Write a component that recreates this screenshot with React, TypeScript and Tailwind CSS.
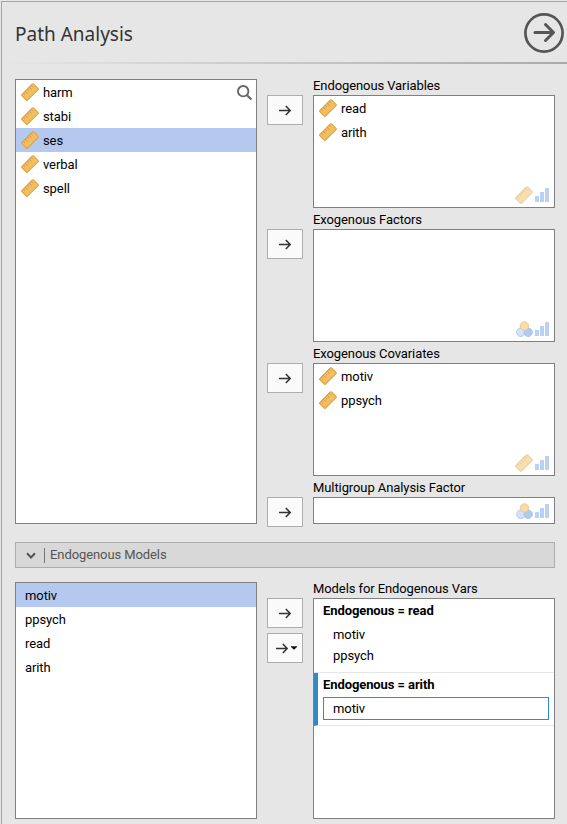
import React from "react";

function Ruler({ faded = false }: { faded?: boolean }) {
  return (
    <svg width="18" height="18" viewBox="0 0 18 18" className={faded ? "opacity-50" : ""}>
      <g transform="rotate(-45 9 9)">
        <rect x="0.6" y="5" width="16.6" height="8" rx="0.8" fill="#f1be64" stroke="#e0a03c" strokeWidth="1" />
        <path d="M3.6 5v2.4M6.3 5v3.4M9 5v2.4M11.7 5v3.4M14.4 5v2.4" stroke="#cf922f" strokeWidth="0.8" />
      </g>
    </svg>
  );
}

function Bars() {
  return (
    <svg width="14" height="15" viewBox="0 0 14 15" fill="#bad1f4">
      <rect x="0" y="8" width="4" height="6" />
      <rect x="5" y="4" width="4" height="10" />
      <rect x="10" y="0" width="4" height="14" />
    </svg>
  );
}

function Circles() {
  return (
    <svg width="17" height="17" viewBox="0 0 17 17" strokeWidth="1">
      <circle cx="4.8" cy="11.3" r="4.2" fill="#d5e2f7" stroke="#b2cbf0" />
      <circle cx="12.2" cy="11.3" r="4.2" fill="#b0cbf2" stroke="#a9c5ef" />
      <circle cx="8.4" cy="5" r="4.2" fill="#f7dca8" stroke="#eacb91" />
    </svg>
  );
}

function Arrow() {
  return (
    <svg width="12" height="11" viewBox="0 0 12 11" fill="none" stroke="#333" strokeWidth="1.6">
      <path d="M0 5.5h11M6.8 1l4.4 4.5L6.8 10" />
    </svg>
  );
}

function MoveButton({ menu = false }: { menu?: boolean }) {
  return (
    <button className={`flex h-[30px] w-9 shrink-0 items-center justify-center border border-[#adadad] bg-[#fafafa] ${menu ? "gap-[3px] pl-[3px]" : ""}`}>
      <Arrow />
      {menu && (
        <svg width="6" height="4" viewBox="0 0 6 4">
          <path d="M0 0.3h6v0.6L3 3.8 0 0.9z" fill="#111" />
        </svg>
      )}
    </button>
  );
}

function Variable({ name, selected = false }: { name: string; selected?: boolean }) {
  return (
    <div className={`flex h-6 items-center gap-1 pl-[5px] ${selected ? "bg-[#b5c9f0]" : ""}`}>
      <Ruler />
      <span className="pt-0.5">{name}</span>
    </div>
  );
}

function Target({ label, kind, names = [], short = false }: { label: string; kind: "ruler" | "circles"; names?: string[]; short?: boolean }) {
  return (
    <div>
      <div className="h-4 leading-[13px]">{label}</div>
      <div className={`flex justify-between border border-[#808080] bg-white ${short ? "h-[27px]" : "h-[113px]"}`}>
        <div>{names.map((n) => <Variable key={n} name={n} />)}</div>
        <div className="flex items-end gap-0.5 pr-[5px] pb-[3px]">
          {kind === "ruler" ? <Ruler faded /> : <Circles />}
          <div className="pb-px">
            <Bars />
          </div>
        </div>
      </div>
    </div>
  );
}

export default function App() {
  return (
    <div className="h-[824px] w-[567px] overflow-hidden bg-[#e6e6e6] pt-px pl-px font-[Roboto,sans-serif] text-[13px] leading-4 tracking-[-0.09px] text-black">
      <div className="h-full border-t border-l border-[#a6a6a6] pl-[13px]">
        <header className="flex h-[60px] items-center justify-between pr-[3px]">
          <h1 className="pt-[3px] font-['Noto_Sans',sans-serif] text-[19px] leading-7 tracking-normal text-[#333]">Path Analysis</h1>
          <svg width="40" height="40" viewBox="0 0 40 40" fill="none" stroke="#555" className="mt-0.5">
            <circle cx="20" cy="20" r="18.6" strokeWidth="2.7" />
            <path d="M11 19.5h18M21.5 11.5l8 8-8 8" strokeWidth="3" strokeLinecap="round" strokeLinejoin="round" />
          </svg>
        </header>
        <div className="-ml-[13px] h-0.5 bg-linear-to-r from-[#e6e6e6] to-[#aaa]" />

        <section className="mt-[15px] flex">
          <div className="flex h-[445px] w-[242px] items-start border border-[#808080] bg-white">
            <div className="relative w-full">
              <Variable name="harm" />
              <Variable name="stabi" />
              <Variable name="ses" selected />
              <Variable name="verbal" />
              <Variable name="spell" />
              <svg width="16" height="16" viewBox="0 0 16 16" fill="none" stroke="#666" className="absolute top-[5px] right-[3px]">
                <circle cx="6.2" cy="6.2" r="5.2" strokeWidth="1.9" />
                <path d="M10 10.2l4.4 4.4" strokeWidth="2.1" />
              </svg>
            </div>
          </div>
          <div className="ml-2.5 flex h-[445px] flex-col gap-[104px] pt-4">
            <MoveButton />
            <MoveButton />
            <MoveButton />
            <MoveButton />
          </div>
          <div className="ml-2.5 flex w-[242px] flex-col gap-[5px]">
            <Target label="Endogenous Variables" kind="ruler" names={["read", "arith"]} />
            <Target label="Exogenous Factors" kind="circles" />
            <Target label="Exogenous Covariates" kind="ruler" names={["motiv", "ppsych"]} />
            <Target label="Multigroup Analysis Factor" kind="circles" short />
          </div>
        </section>

        <div className="mt-[18px] flex h-[26px] w-[540px] items-center border border-[#adadad] bg-[#d8d8d8] pl-2.5 text-[#555]">
          <svg width="10" height="8" viewBox="0 0 10 8" fill="none" stroke="#555" strokeWidth="2" className="mt-0.5">
            <path d="M1 1.2l4 4.3 4-4.3" />
          </svg>
          <div className="mr-[5px] ml-2 h-[15px] w-px bg-[#777]" />
          <span className="tracking-[-0.09px]">Endogenous Models</span>
        </div>

        <section className="mt-3.5 flex">
          <div className="h-[237px] w-[242px] border border-[#808080] bg-white">
            {["motiv", "ppsych", "read", "arith"].map((n, i) => (
              <div key={n} className={`h-6 pt-px pl-[9px] leading-6 ${i === 0 ? "bg-[#b5c9f0]" : ""}`}>{n}</div>
            ))}
          </div>
          <div className="ml-2.5 flex flex-col gap-[5px] pt-4">
            <MoveButton />
            <MoveButton menu />
          </div>
          <div className="ml-2.5 w-[242px]">
            <div className="h-4 leading-[13px]">Models for Endogenous Vars</div>
            <div className="h-[221px] border border-[#808080] bg-white">
              <div className="h-[74px] border-b border-[#e6e6e6] pl-[9px]">
                <div className="h-[25px] leading-[23px] font-bold">Endogenous = read</div>
                <div className="h-[21px] pl-2.5 leading-[21px]">motiv</div>
                <div className="h-[21px] pl-2.5 leading-[21px]">ppsych</div>
              </div>
              <div className="h-[53px] border-b border-l-4 border-b-[#e6e6e6] border-l-[#2e8bc7] pr-[5px] pl-[5px]">
                <div className="h-6 leading-[23px] font-bold">Endogenous = arith</div>
                <div className="h-[23px] border border-[#2e8bc7] pl-[9px] leading-[21px]">motiv</div>
              </div>
            </div>
          </div>
        </section>
      </div>
    </div>
  );
}
